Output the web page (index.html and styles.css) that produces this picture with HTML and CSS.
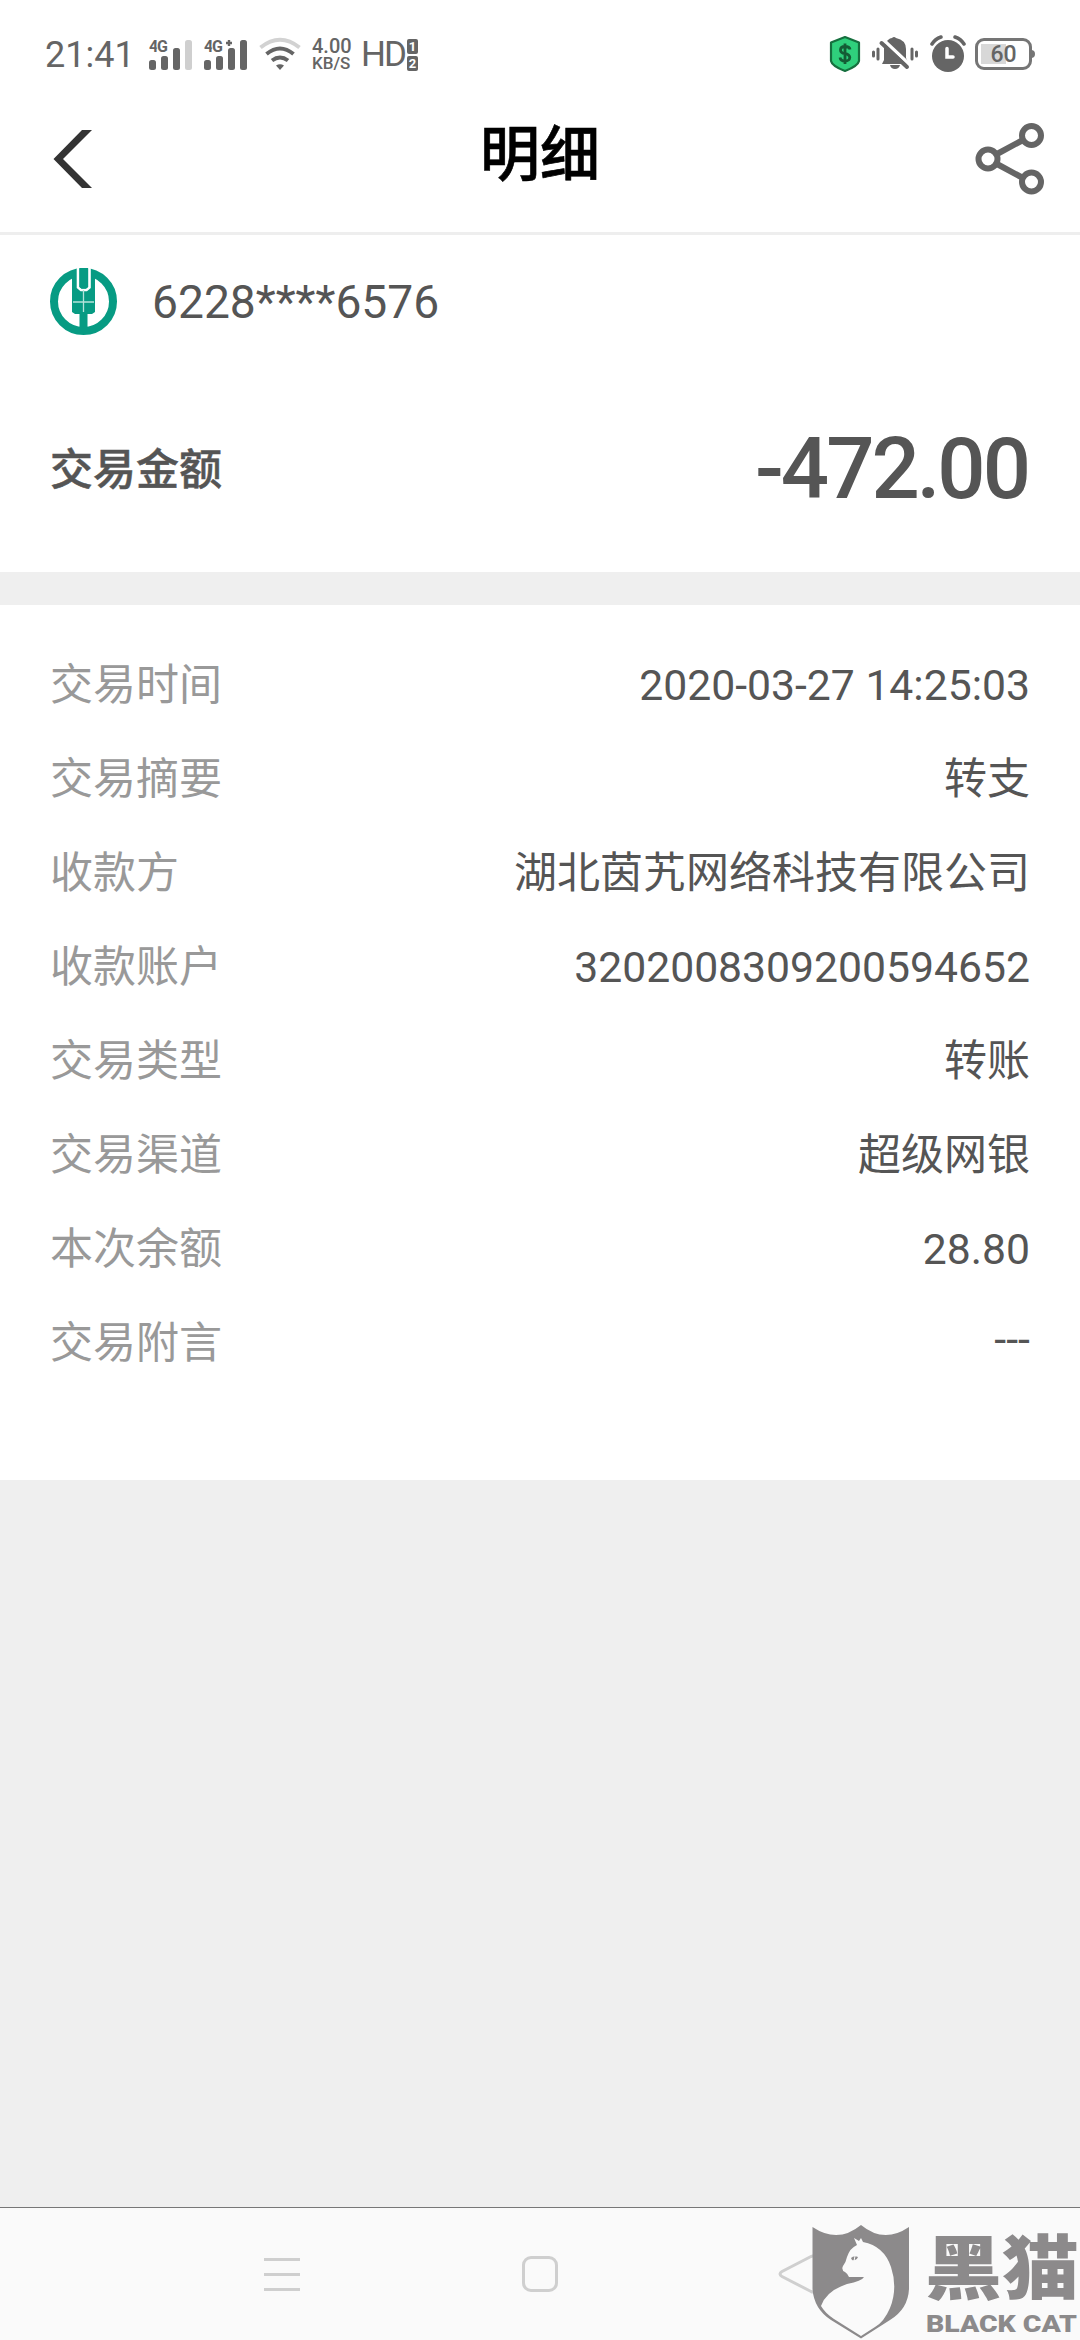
FILE: index.html
```html
<!DOCTYPE html>
<html lang="zh-CN">
<head>
  <meta charset="UTF-8">
  <meta name="viewport" content="width=device-width, initial-scale=1.0">
  <title>明细</title>
  <link rel="stylesheet" href="styles.css">
</head>
<body>

  <!-- 状态栏 -->
  <div class="status-bar">
    <div class="status-left">
      <span class="clock">21:41</span>
      <svg class="signals" width="102" height="36" viewBox="0 0 102 36">
        <g fill="#656565">
          <rect x="1" y="24" width="7" height="10" rx="2.5"/>
          <rect x="13" y="20" width="7" height="14" rx="2.5"/>
          <rect x="25" y="12" width="7" height="22" rx="2.5"/>
          <rect x="37" y="4" width="7" height="30" rx="2.5" fill="#cfcfcf"/>
          <rect x="56" y="24" width="7" height="10" rx="2.5"/>
          <rect x="68" y="20" width="7" height="14" rx="2.5"/>
          <rect x="80" y="12" width="7" height="22" rx="2.5"/>
          <rect x="92" y="4" width="7" height="30" rx="2.5"/>
          <path d="M78 7h6M81 4v6" stroke="#656565" stroke-width="2.4"/>
        </g>
        <text class="net" x="1" y="16" textLength="19">4G</text>
        <text class="net" x="56" y="16" textLength="19">4G</text>
      </svg>
      <svg class="wifi" width="42" height="34" viewBox="0 0 42 34" fill="none" stroke-width="4">
        <path d="M1.5 10.5Q21-5 40.5 10.5" stroke="#d2d2d2"/>
        <path d="M7.5 17Q21 6 34.5 17" stroke="#656565"/>
        <path d="M13 23.5Q21 17.5 29 23.5" stroke="#656565"/>
        <path d="M17 28.5Q21 26 25 28.5L21 33z" fill="#656565" stroke="none"/>
      </svg>
      <div class="speed"><span>4.00</span><span class="unit">KB/S</span></div>
      <span class="hd">HD</span>
      <div class="sims"><span>1</span><span>2</span></div>
    </div>
    <div class="status-right">
      <svg width="32" height="38" viewBox="0 0 32 38">
        <path d="M16 2L30 7.5V26Q29 31 16 36Q3 31 2 26V7.5z" fill="#2fd07c" stroke="#16703f" stroke-width="2.2" stroke-linejoin="round"/>
        <path d="M21 14.5Q20.5 11.5 16 11.5T11.5 15Q11.5 18 16 18.6T20.8 22.5Q20.5 26 16 26T11 22.5M16 8.5V29" fill="none" stroke="#145c35" stroke-width="2.8"/>
      </svg>
      <svg width="46" height="38" viewBox="0 0 46 38">
        <path d="M1.5 17v4M6 14v10M40 14v10M44.5 17v4" stroke="#656565" stroke-width="3" stroke-linecap="round"/>
        <path d="M16 5Q18 3 20 3Q22 1 24 3Q34 5 34 14V23L37 29H10L12 25V14Q12 8 16 5zM18 30H28Q27 34 23 34T18 30z" fill="#656565"/>
        <path d="M11.5 5L38 30" stroke="#fff" stroke-width="3.5"/>
        <path d="M9.5 8L35 32" stroke="#656565" stroke-width="4" stroke-linecap="round"/>
      </svg>
      <svg width="38" height="38" viewBox="0 0 38 38">
        <circle cx="19" cy="21" r="16" fill="#656565"/>
        <path d="M3 9Q6 4 12 2M26 2Q32 4 35 9" fill="none" stroke="#656565" stroke-width="3.5" stroke-linecap="round"/>
        <path d="M18 13.5V22H24" fill="none" stroke="#fff" stroke-width="3.5" stroke-linecap="round"/>
      </svg>
      <div class="battery"><span>60</span></div>
    </div>
  </div>

  <!-- 标题栏 -->
  <header class="header">
    <svg class="back" width="42" height="60" viewBox="0 0 42 60">
      <path d="M30 1H40L11 30L40 59H30L1.5 30z" fill="#333"/>
    </svg>
    <h1>明细</h1>
    <svg class="share" width="70" height="72" viewBox="0 0 70 72" fill="none" stroke="#656565" stroke-width="6">
      <path d="M22 31L48 17M22 41L48 55"/>
      <circle cx="13" cy="36" r="9.5"/>
      <circle cx="56.5" cy="12.5" r="9.5"/>
      <circle cx="56.5" cy="59" r="9.5"/>
    </svg>
  </header>

  <!-- 卡号与金额 -->
  <section class="summary">
    <div class="card">
      <svg width="67" height="67" viewBox="0 0 67 67">
        <circle cx="33.5" cy="33.5" r="29.5" fill="none" stroke="#079b83" stroke-width="8"/>
        <path d="M22 3H45V44L42 46H37.5V62H29.5V46H25L22 44z" fill="#079b83"/>
        <path d="M28 0V19.5L31 22H36.5L39.5 19.5V0" fill="none" stroke="#fff" stroke-width="2.6"/>
        <path d="M29.5 0H38V19L36 20.5H31.5L29.5 19z" fill="#079b83"/>
        <path d="M33.5 22V44M23 34H44" stroke="#b5e3da" stroke-width="1.3"/>
      </svg>
      <span class="card-number">6228****6576</span>
    </div>
    <div class="amount-row">
      <span class="amount-label">交易金额</span>
      <span class="amount">-472.00</span>
    </div>
  </section>

  <!-- 交易明细 -->
  <section class="details">
    <div class="row"><span class="label">交易时间</span><span class="value">2020-03-27 14:25:03</span></div>
    <div class="row"><span class="label">交易摘要</span><span class="value text">转支</span></div>
    <div class="row"><span class="label">收款方</span><span class="value text">湖北茵艽网络科技有限公司</span></div>
    <div class="row"><span class="label">收款账户</span><span class="value">3202008309200594652</span></div>
    <div class="row"><span class="label">交易类型</span><span class="value text">转账</span></div>
    <div class="row"><span class="label">交易渠道</span><span class="value text">超级网银</span></div>
    <div class="row"><span class="label">本次余额</span><span class="value">28.80</span></div>
    <div class="row"><span class="label">交易附言</span><span class="value text">---</span></div>
  </section>

  <!-- 系统导航栏 -->
  <nav class="nav-bar">
    <svg width="40" height="40" viewBox="0 0 40 40" fill="none" stroke="#cfcfcf" stroke-width="3">
      <path d="M2 5.5H38M2 20.5H38M2 35.5H38"/>
    </svg>
    <svg width="40" height="40" viewBox="0 0 40 40" fill="none" stroke="#cfcfcf" stroke-width="3">
      <rect x="3.5" y="3.5" width="33" height="33" rx="7.5"/>
    </svg>
    <svg width="40" height="40" viewBox="0 0 40 40" fill="none" stroke="#cfcfcf" stroke-width="3">
      <path d="M33 2.5L4 17.5Q0 20 4 22.5L33 37.5Q37 39 37 35V5Q37 1 33 2.5z"/>
    </svg>
  </nav>

  <!-- 黑猫水印 -->
  <div class="watermark">
    <svg width="98" height="116" viewBox="0 0 98 116">
      <path d="M0.5 3Q26 20 49 1Q72 20 97 3V65Q96 85 78 96L49 114.5L19 96Q2 85 0.5 65z" fill="#8c8a8b"/>
      <path d="M42 14L47 17L49 14L51 18Q72 22 79 43Q86 64 78 84Q72 98 63 103L49 112L22 95Q13 89 9 82Q14 67 35 60Q50 57 52 53H37Q36 50 33 48Q29 46 31 42Q34 38 35 33Q38 24 45 21z" fill="#fafafa"/>
      <path d="M39 34Q42 31 46 33Q44 37 40 36z" fill="#8c8a8b"/>
      <path d="M43 32L42 37" stroke="#fafafa"/>
    </svg>
    <svg class="wordmark" width="154" height="146" viewBox="0 -30 154 146">
      <text class="brand-cn" x="-1" y="70" textLength="154" lengthAdjust="spacingAndGlyphs">黑猫</text>
      <text class="brand-en" x="0" y="108" textLength="151" lengthAdjust="spacingAndGlyphs">BLACK CAT</text>
    </svg>
  </div>

</body>
</html>
```
FILE: styles.css
```css
* {
  box-sizing: border-box;
}

body {
  display: flex;
  flex-direction: column;
  height: 2340px;
  margin: 0;
  font-family: Roboto, "Noto Sans CJK SC", sans-serif;
  color: #555;
  background-color: #efefef;
  position: relative;
  overflow: hidden;
}

svg {
  display: block;
  flex-shrink: 0;
}

.status-bar {
  display: flex;
  justify-content: space-between;
  height: 108px;
  padding: 0 48px 0 45px;
  background-color: #fff;
  color: #656565;
}

.status-left,
.status-right {
  display: flex;
  align-items: center;
  height: 108px;
}

.clock {
  width: 103px;
  padding-top: 2px;
  font-size: 36px;
}

.net {
  font-size: 16px;
  font-weight: 700;
  fill: #656565;
  stroke: #fff;
  stroke-width: 2px;
  paint-order: stroke;
}

.wifi {
  margin-left: 9px;
}

.speed {
  display: flex;
  flex-direction: column;
  width: 49px;
  margin-left: 11px;
  padding-top: 2px;
  font-size: 20px;
  font-weight: 500;
  line-height: 17px;
}

.speed .unit {
  font-size: 17px;
}

.hd {
  padding-top: 2px;
  font-size: 35px;
  letter-spacing: -2px;
  line-height: 36px;
}

.sims {
  display: flex;
  flex-direction: column;
  gap: 2px;
  margin-left: 2px;
  padding-top: 2px;
}

.sims span {
  width: 11px;
  height: 15px;
  border-radius: 2px;
  background-color: #656565;
  color: #fff;
  font-size: 13px;
  font-weight: 700;
  line-height: 15px;
  text-align: center;
}

.status-right {
  gap: 11px;
}

.battery {
  position: relative;
  width: 57px;
  height: 32px;
  margin-left: -3px;
  border: 3px solid #757575;
  border-radius: 9px;
  background: linear-gradient(#d8d8d8, #d8d8d8) 3px 3px / 25px 20px no-repeat;
  font-size: 23px;
  font-weight: 500;
  line-height: 27px;
  text-align: center;
}

.battery::after {
  content: "";
  position: absolute;
  top: 9px;
  right: -6px;
  width: 4px;
  height: 8px;
  border-radius: 0 4px 4px 0;
  background-color: #757575;
}

.header {
  display: grid;
  grid-template-columns: 1fr auto 1fr;
  align-items: center;
  height: 127px;
  padding: 0 35px 23px;
  border-bottom: 3px solid #eee;
  background-color: #fff;
}

.header h1 {
  margin: 0;
  padding-bottom: 5px;
  color: #000;
  font-size: 60px;
  font-weight: 500;
  line-height: 88px;
  -webkit-text-stroke: 0.6px #000;
}

.back {
  margin-left: 17px;
}

.share {
  justify-self: end;
}

.summary {
  height: 337px;
  padding: 33px 50px 0;
  background-color: #fff;
}

.card {
  display: flex;
  align-items: center;
  gap: 35px;
  height: 67px;
}

.card-number {
  padding-top: 1px;
  font-size: 46.2px;
}

.amount-row {
  display: flex;
  justify-content: space-between;
  align-items: center;
  height: 100px;
  margin-top: 84px;
}

.amount-label {
  padding-bottom: 6px;
  font-size: 43px;
  font-weight: 500;
  -webkit-text-stroke: 0.5px #555;
}

.amount {
  padding-right: 2px;
  font-size: 85px;
  font-weight: 500;
  letter-spacing: -3px;
}

.details {
  height: 875px;
  margin-top: 33px;
  padding: 33px 50px 0;
  background-color: #fff;
}

.row {
  display: flex;
  justify-content: space-between;
  align-items: center;
  height: 94px;
  font-size: 42.7px;
}

.label {
  padding-bottom: 9px;
  color: #999;
  font-size: 43px;
}

.value.text {
  padding-bottom: 9px;
  font-size: 43px;
}

.nav-bar {
  display: flex;
  justify-content: space-between;
  height: 133px;
  margin-top: auto;
  padding: 46px 262px 0;
  border-top: 1px solid #777;
  background-color: #fafafa;
}

/* 盖在导航栏右侧 */
.watermark {
  position: absolute;
  right: 0;
  bottom: 0;
  display: flex;
  align-items: flex-end;
  gap: 16px;
}

.wordmark text {
  fill: #8c8a8b;
}

.brand-cn {
  font-family: "Noto Sans CJK SC", sans-serif;
  font-size: 70px;
  font-weight: 900;
}

.brand-en {
  font-size: 24px;
  font-weight: 900;
}
```
